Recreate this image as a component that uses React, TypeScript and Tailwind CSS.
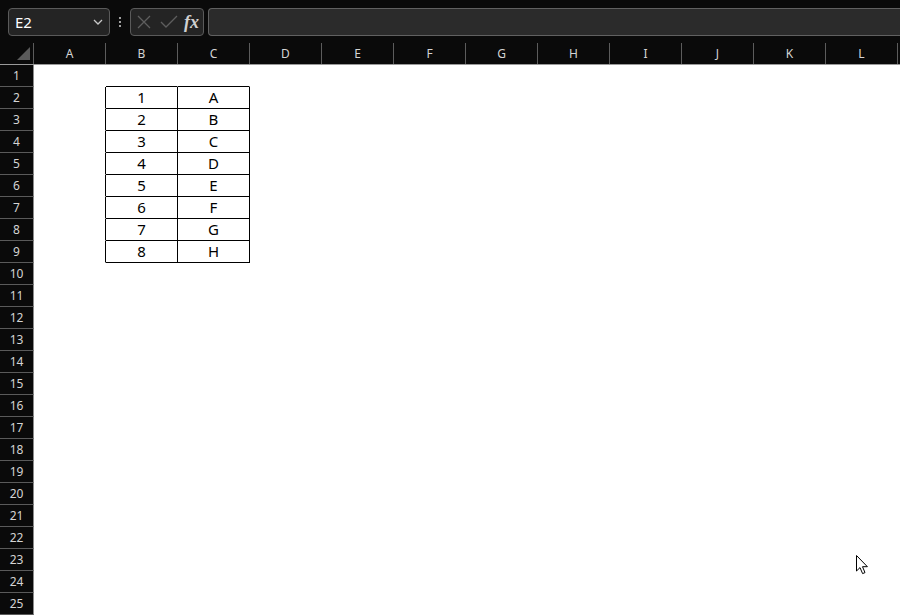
import React from 'react';

const COLS = ['A', 'B', 'C', 'D', 'E', 'F', 'G', 'H', 'I', 'J', 'K', 'L', ''];
const ROWS = Array.from({ length: 25 }, (_, i) => i + 1);

// table lives in B2:C9
const TABLE: Record<number, [string, string]> = {
  2: ['1', 'A'], 3: ['2', 'B'], 4: ['3', 'C'], 5: ['4', 'D'],
  6: ['5', 'E'], 7: ['6', 'F'], 8: ['7', 'G'], 9: ['8', 'H'],
};

function Cell({ row, col }: { row: number; col: number }) {
  const inTable = TABLE[row] !== undefined;
  // column index 1 = B, 2 = C
  const isData = inTable && (col === 1 || col === 2);
  const rightBlack = inTable && col <= 2;
  const bottomBlack = (inTable || row === 1) && (col === 1 || col === 2);
  return (
    <div
      className={
        'w-[72px] h-[22px] shrink-0 border-r border-b flex items-center justify-center text-[15px] text-black ' +
        (rightBlack ? 'border-r-black ' : 'border-r-white ') +
        (bottomBlack ? 'border-b-black' : 'border-b-white')
      }
    >
      {isData ? TABLE[row][col - 1] : ''}
    </div>
  );
}

function Cursor() {
  return (
    <svg className="absolute left-[855px] top-[554px]" width="14" height="22" viewBox="0 0 14 22">
      <path
        d="M1.5 1.5 L1.5 17 L5 13.6 L7.6 19.6 L10 18.6 L7.5 12.7 L12.4 12.7 Z"
        fill="#fff"
        stroke="#000"
        strokeWidth="1"
        strokeLinejoin="miter"
      />
    </svg>
  );
}

export default function App() {
  return (
    <div className="relative w-[900px] h-[615px] overflow-hidden bg-[#0a0a0a] font-['Noto_Sans','Open_Sans',sans-serif]">
      {/* Formula bar */}
      <div className="h-[43px] flex items-start pt-[8px] pl-[8px]">
        <div className="w-[102px] h-[28px] rounded-[4px] border border-[#5a5a5a] bg-[#242424] flex items-center justify-between pl-[6px] pr-[6px]">
          <span className="text-[15px] text-white leading-none">E2</span>
          <svg width="10" height="6" viewBox="0 0 10 6">
            <path d="M1 1 L5 5 L9 1" fill="none" stroke="#c8c8c8" strokeWidth="1.3" />
          </svg>
        </div>
        <div className="w-[20px] h-[28px] flex flex-col items-center justify-center gap-[2px]">
          <span className="w-[2px] h-[2px] bg-[#a0a0a0]" />
          <span className="w-[2px] h-[2px] bg-[#a0a0a0]" />
          <span className="w-[2px] h-[2px] bg-[#a0a0a0]" />
        </div>
        <div className="w-[74px] h-[28px] rounded-[4px] border border-[#5a5a5a] bg-[#242424] flex items-center pl-[6px]">
          <svg width="14" height="14" viewBox="0 0 14 14">
            <path d="M1 1 L13 13 M13 1 L1 13" stroke="#5e5e5e" strokeWidth="1.3" />
          </svg>
          <svg width="18" height="14" viewBox="0 0 18 14" className="ml-[9px]">
            <path d="M1 7 L6 12 L17 1" fill="none" stroke="#5e5e5e" strokeWidth="1.3" />
          </svg>
          <span className="ml-[6px] text-[18px] italic font-bold text-[#d0d0d0] leading-none font-['Liberation_Serif',serif]">fx</span>
        </div>
        <div className="ml-[4px] flex-1 h-[28px] rounded-l-[4px] border border-r-0 border-[#616161] bg-[#2b2b2b]" />
      </div>

      {/* Column headers */}
      <div className="flex h-[22px] border-b border-[#9a9a9a]">
        <div className="relative w-[34px] shrink-0 border-r border-[#5c5c5c]">
          <svg className="absolute left-[17px] top-[4px]" width="14" height="14" viewBox="0 0 14 14">
            <path d="M13 0 L13 13 L0 13 Z" fill="#5a5a5a" />
          </svg>
        </div>
        {COLS.map((c, i) => (
          <div
            key={i}
            className="w-[72px] shrink-0 border-r border-[#5c5c5c] flex items-center justify-center text-[12px] text-[#d4d4d4]"
          >
            {c}
          </div>
        ))}
      </div>

      {/* Rows */}
      <div className="flex flex-col">
        {ROWS.map((r) => (
          <div key={r} className="flex h-[22px]">
            <div className="w-[34px] h-[22px] shrink-0 border-r border-r-[#8c8c8c] border-b border-b-[#5a5a5a] bg-[#0a0a0a] flex items-center justify-center text-[12px] text-[#d4d4d4]">
              {r}
            </div>
            <div className="flex bg-white">
              {COLS.map((c, i) => (
                <Cell key={i} row={r} col={i} />
              ))}
            </div>
          </div>
        ))}
      </div>

      <Cursor />
    </div>
  );
}
